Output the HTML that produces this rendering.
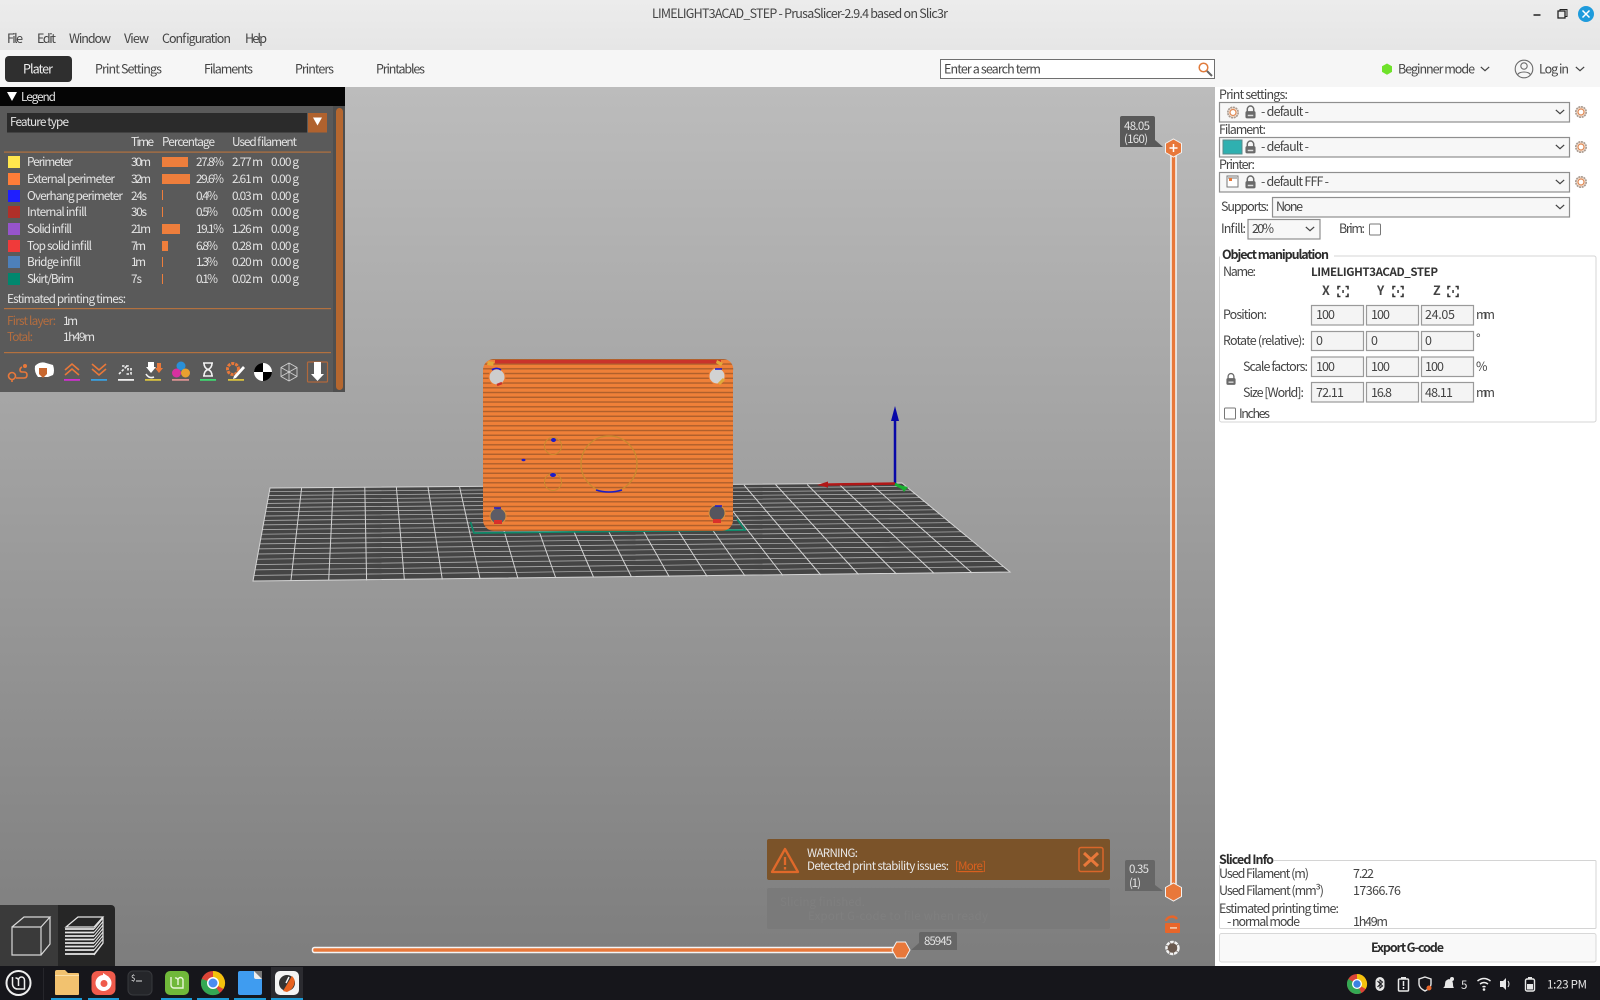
<!DOCTYPE html>
<html><head><meta charset="utf-8"><title>PrusaSlicer</title>
<style>
html,body{margin:0;padding:0;width:1600px;height:1000px;overflow:hidden;background:#fff}
svg{display:block}
text{font-family:"Noto Sans CJK SC","Liberation Sans",sans-serif;font-size:12.5px;fill:#444}
.l text{font-size:11.8px;fill:#e4e4e4}
.h{stroke:#8f8f8f;fill:#f7f7f7;stroke-width:1.2}
.i{stroke:#9a9a9a;fill:#f4f4f4;stroke-width:1.2}
.b{font-weight:bold}
.w{fill:none;stroke:#f2f2f2;stroke-width:1.6}
.o{fill:none;stroke:#e8783a;stroke-width:1.6}
</style></head><body>
<svg width="1600" height="1000" viewBox="0 0 1600 1000" xmlns="http://www.w3.org/2000/svg">
<defs>
<linearGradient id="bg" x1="0" y1="0" x2="0" y2="1"><stop offset="0" stop-color="#bcbcbc"/><stop offset="1" stop-color="#7d7d7d"/></linearGradient>
<linearGradient id="tb" x1="0" y1="0" x2="0" y2="1"><stop offset="0" stop-color="#ececec"/><stop offset="1" stop-color="#e6e6e6"/></linearGradient>
<pattern id="st" patternUnits="userSpaceOnUse" width="10" height="4.75" y="360"><rect width="10" height="4.75" fill="#ef8038"/><rect y="3.3" width="10" height="1.45" fill="#b0602c"/></pattern>
<symbol id="gear" viewBox="0 0 14 14" overflow="visible"><circle cx="7" cy="7" r="5.2" fill="#f4dfd0" stroke="#a89a90" stroke-width="1.6" stroke-dasharray="2 .7"/><circle cx="7" cy="7" r="3" fill="#fff" stroke="#e08a55" stroke-width="1.2"/></symbol>
<symbol id="lock" viewBox="0 0 12 14" overflow="visible"><path d="M2.500 6.500V4a3.500 3.500 0 0 1 7 0v2.500" fill="none" stroke="#6a6a6a" stroke-width="1.600"/><rect x=".5" y="6" width="11" height="8" rx="1.800" fill="#6a6a6a"/><rect x="3" y="10" width="6" height="1.600" fill="#ddd"/></symbol>
<symbol id="chev" viewBox="0 0 12 7" overflow="visible"><path d="M1 1l5 4.500L11 1" fill="none" stroke="#444" stroke-width="1.500"/></symbol>
<symbol id="fix" viewBox="0 0 12 12" overflow="visible"><path d="M3.500 1H1v3M8.500 1H11v3M3.500 11H1V8M8.500 11H11V8" fill="none" stroke="#333" stroke-width="1.600"/><rect x="5.300" y="4.500" width="1.500" height="3" fill="#333"/></symbol>
</defs>

<rect width="1600" height="1000" fill="#fff"/>
<!-- viewport -->
<rect x="0" y="87" width="1215" height="880" fill="url(#bg)"/>
<!-- title + menu -->
<rect width="1600" height="50" fill="url(#tb)"/>
<rect y="50" width="1600" height="37" fill="#f6f6f6"/>
<text x="652" y="18" textLength="296">LIMELIGHT3ACAD_STEP - PrusaSlicer-2.9.4 based on Slic3r</text>
<path d="M1533.500 15h7" stroke="#222" stroke-width="1.500"/>
<rect x="1558" y="11" width="7" height="7" fill="none" stroke="#222" stroke-width="1.300"/><path d="M1560 11V9.500h7v7h-2" fill="none" stroke="#222"/>
<circle cx="1586" cy="14" r="8" fill="#1e9bdc"/><path d="M1582.500 10.500l7 7m0-7l-7 7" stroke="#fff" stroke-width="1.500"/>
<text x="7" y="43" textLength="16">File</text><text x="37" y="43" textLength="19">Edit</text><text x="69" y="43" textLength="42">Window</text><text x="124" y="43" textLength="25">View</text><text x="162" y="43" textLength="69">Configuration</text><text x="245" y="43" textLength="22">Help</text>

<rect x="5" y="56" width="67" height="26" rx="4" fill="#2f2f2f"/>
<text x="23" y="73.500" textLength="30" style="fill:#f0f0f0">Plater</text>
<text x="95" y="73.500" textLength="67">Print Settings</text><text x="204" y="73.500" textLength="49">Filaments</text><text x="295" y="73.500" textLength="39">Printers</text><text x="376" y="73.500" textLength="49">Printables</text>

<rect x="940.500" y="59.500" width="274" height="19" fill="#fff" stroke="#6f6f6f"/>
<text x="944" y="73.500" textLength="97">Enter a search term</text>
<circle cx="1203.500" cy="67.500" r="4.300" fill="none" stroke="#e07b3c" stroke-width="1.500"/><path d="M1207 71l5 5" stroke="#666" stroke-width="2"/>
<path d="M1387 63.500l5 2.800v5.600l-5 2.800-5-2.800v-5.600z" fill="#6fe22a"/>
<text x="1398" y="73.500" textLength="77">Beginner mode</text><use href="#chev" x="1480" y="66" width="10" height="6"/>
<circle cx="1524" cy="69" r="8.800" fill="none" stroke="#6b6b6b" stroke-width="1.100"/><circle cx="1524" cy="66" r="3.200" fill="none" stroke="#6b6b6b" stroke-width="1.100"/><path d="M1517.500 75c1-4 12-4 13 0" fill="none" stroke="#6b6b6b" stroke-width="1.100"/>
<text x="1539" y="73.500" textLength="30">Log in</text><use href="#chev" x="1575" y="66" width="10" height="6"/>

<!-- bed -->
<path d="M270 488L902 483L1010 572L253 581Z" fill="#454545"/>
<g stroke="#bdbdbd" stroke-width=".7" fill="none">
<path d="M269.300 491.700L906.300 486.500M268.600 495.500L910.700 490.200M267.900 499.400L915.200 493.900M267.200 503.400L919.900 497.700M266.400 507.500L924.600 501.700M265.700 511.700L929.500 505.700M264.900 516L934.500 509.800M264.100 520.400L939.600 514M263.200 524.900L944.800 518.300M262.400 529.500L950.100 522.700M261.500 534.200L955.600 527.200M260.700 539L961.200 531.800M259.800 543.900L966.800 536.500M258.900 548.900L972.600 541.300M257.900 554L978.600 546.200M257 559.200L984.600 551.100M256 564.500L990.700 556.200M255 569.900L997 561.400M254 575.400L1003.400 566.600"/>
</g>
<g stroke="#d4d4d4" stroke-width="1" fill="none">
<path d="M270 488L902 483L1010 572L253 581Z"/>
<path d="M301.600 488L290.900 581M333.200 488L328.700 580.500M364.800 487.500L366.600 580.500M396.400 487.500L404.400 580M428 487L442.300 579.500M459.600 487L480.100 579M491.200 487L518 578.500M522.800 486L555.800 578M554.400 486L593.700 577.500M586 486L631.500 577M617.600 485.500L669.400 577M649.200 485L707.200 576.500M680.800 485L745.100 576M712.400 485L782.900 575.500M744 485L820.800 575M775.600 484.500L858.600 574.500M807.200 484.500L896.500 574M838.800 484L934.300 573.500M870.400 483.500L972.200 573"/>
</g>
<!-- axes -->
<path d="M895 414V484" stroke="#0808a8" stroke-width="2.500"/><path d="M895 406l-4 15h8z" fill="#0808a8"/>
<path d="M826 484.500L895 483.500" stroke="#b01818" stroke-width="2.500"/><path d="M817 485l11-3.500v6z" fill="#b01818"/>
<path d="M895 484L905 489" stroke="#18b030" stroke-width="3"/><path d="M899 485l9 2-4 5z" fill="#18b030"/>
<!-- skirt -->
<path d="M470.500 522L474 533L745 530L737 519" fill="none" stroke="#0f8a6a" stroke-width="1.700"/>
<!-- part -->
<path d="M493 359H723a10 10 0 0 1 10 12V520a11 11 0 0 1-11 11H494a11 11 0 0 1-11-11V370a11 11 0 0 1 10-11Z" fill="url(#st)"/>
<rect x="495" y="360" width="226" height="3.500" fill="#c9332b"/>
<path d="M488 361l6 1-1 4-6-1z" fill="#e0a83a"/>
<path d="M717 360l6 3-2 3-5-3z" fill="#e0a83a"/>
<circle cx="497" cy="377" r="8" fill="#cdcdcd" stroke="#ee7f36"/><path d="M492 370a7 7 0 0 1 9 0" fill="none" stroke="#1818d0" stroke-width="1.500"/><path d="M497 385l5-2" stroke="#c9332b" stroke-width="2.500"/>
<circle cx="717" cy="376" r="8" fill="#d2d2d2" stroke="#ee7f36"/><path d="M715 369h7" stroke="#1818d0" stroke-width="1.500"/><path d="M719 384l5-5" stroke="#e0a83a" stroke-width="3"/>
<circle cx="498" cy="516" r="8" fill="#5c5c66" stroke="#d9913d"/><path d="M494 508h7" stroke="#1818d0" stroke-width="1.500"/><rect x="494" y="520" width="8" height="4" fill="#d9302b"/>
<circle cx="717" cy="513" r="8" fill="#55555e" stroke="#d9913d"/><path d="M715 506h7" stroke="#1818d0" stroke-width="1.500"/><rect x="713" y="519" width="8" height="4" fill="#d9302b"/>
<circle cx="609" cy="464" r="28" fill="none" stroke="#c98a30" stroke-width="1.300"/>
<path d="M596 490q13 4 26 0" fill="none" stroke="#1c1cc8" stroke-width="1.600"/>
<circle cx="553" cy="446" r="8.500" fill="none" stroke="#c98a30"/><circle cx="553" cy="482" r="8.500" fill="none" stroke="#c98a30"/>
<ellipse cx="553.500" cy="440" rx="2.500" ry="2" fill="#1c1cc8"/><ellipse cx="553" cy="475" rx="3" ry="2" fill="#1c1cc8"/><ellipse cx="523.500" cy="460" rx="2" ry="1.200" fill="#1c1cc8"/>

<!-- legend -->
<rect x="0" y="87" width="345" height="305" fill="#5a5a5a"/>
<rect x="333" y="106" width="12" height="286" fill="#4f4f4f"/>
<rect x="0" y="87" width="345" height="19" fill="#050505"/>
<rect x="336" y="108" width="7" height="282" rx="3.500" fill="#b5672f"/>
<rect x="7" y="113" width="300" height="19.500" fill="#2b2b2b"/>
<rect x="308" y="113" width="19" height="19.500" fill="#b0622e"/>
<path d="M313 117.500h9l-4.500 8z" fill="#fff"/>
<path d="M7 92h10l-5 9z" fill="#fff"/>
<g class="l">
<text x="21" y="101" textLength="35">Legend</text>
<text x="10" y="126" textLength="59">Feature type</text>
<text x="131" y="146" textLength="23">Time</text><text x="162" y="146" textLength="53">Percentage</text><text x="232" y="146" textLength="65">Used filament</text>
<rect x="4" y="151.500" width="327" height="1.200" fill="#b3713f"/>

<rect x="8" y="156" width="12" height="12" fill="#ffe64d"/><text x="27" y="166" textLength="46">Perimeter</text><text x="131" y="166" textLength="20">30m</text><rect x="162" y="157" width="26" height="10" fill="#ee7e3c"/><text x="196" y="166" textLength="28">27.8%</text><text x="232" y="166" textLength="31">2.77 m</text><text x="271" y="166" textLength="28">0.00 g</text>
<rect x="8" y="173" width="12" height="12" fill="#ff7d38"/><text x="27" y="183" textLength="88">External perimeter</text><text x="131" y="183" textLength="20">32m</text><rect x="162" y="174" width="28" height="10" fill="#ee7e3c"/><text x="196" y="183" textLength="28">29.6%</text><text x="232" y="183" textLength="31">2.61 m</text><text x="271" y="183" textLength="28">0.00 g</text>
<rect x="8" y="190" width="12" height="12" fill="#1f1fff"/><text x="27" y="200" textLength="96">Overhang perimeter</text><text x="131" y="200" textLength="16">24s</text><rect x="162" y="190" width="1" height="10" fill="#ee7e3c"/><text x="196" y="200" textLength="22">0.4%</text><text x="232" y="200" textLength="31">0.03 m</text><text x="271" y="200" textLength="28">0.00 g</text>
<rect x="8" y="206" width="12" height="12" fill="#b03029"/><text x="27" y="216" textLength="60">Internal infill</text><text x="131" y="216" textLength="16">30s</text><rect x="162" y="207" width="1" height="10" fill="#ee7e3c"/><text x="196" y="216" textLength="22">0.5%</text><text x="232" y="216" textLength="31">0.05 m</text><text x="271" y="216" textLength="28">0.00 g</text>
<rect x="8" y="223" width="12" height="12" fill="#9654cc"/><text x="27" y="233" textLength="45">Solid infill</text><text x="131" y="233" textLength="20">21m</text><rect x="162" y="224" width="18" height="10" fill="#ee7e3c"/><text x="196" y="233" textLength="28">19.1%</text><text x="232" y="233" textLength="31">1.26 m</text><text x="271" y="233" textLength="28">0.00 g</text>
<rect x="8" y="240" width="12" height="12" fill="#f03a3a"/><text x="27" y="250" textLength="65">Top solid infill</text><text x="131" y="250" textLength="15">7m</text><rect x="162" y="241" width="6" height="10" fill="#ee7e3c"/><text x="196" y="250" textLength="22">6.8%</text><text x="232" y="250" textLength="31">0.28 m</text><text x="271" y="250" textLength="28">0.00 g</text>
<rect x="8" y="256" width="12" height="12" fill="#4d80ba"/><text x="27" y="266" textLength="54">Bridge infill</text><text x="131" y="266" textLength="15">1m</text><rect x="162" y="257" width="1" height="10" fill="#ee7e3c"/><text x="196" y="266" textLength="22">1.3%</text><text x="232" y="266" textLength="31">0.20 m</text><text x="271" y="266" textLength="28">0.00 g</text>
<rect x="8" y="273" width="12" height="12" fill="#00876e"/><text x="27" y="283" textLength="47">Skirt/Brim</text><text x="131" y="283" textLength="11">7s</text><rect x="162" y="274" width="1" height="10" fill="#ee7e3c"/><text x="196" y="283" textLength="22">0.1%</text><text x="232" y="283" textLength="31">0.02 m</text><text x="271" y="283" textLength="28">0.00 g</text>

<text x="7" y="303" textLength="119">Estimated printing times:</text>
<rect x="4" y="308" width="327" height="1.200" fill="#b3713f"/>
<text x="7" y="325" textLength="49" style="fill:#b56d3e">First layer:</text><text x="63" y="325" textLength="15">1m</text>
<text x="7" y="341" textLength="26" style="fill:#b56d3e">Total:</text><text x="63" y="341" textLength="32">1h49m</text>
<rect x="4" y="352" width="327" height="1.200" fill="#b3713f"/>
</g>
<!-- legend icons -->
<circle cx="12" cy="376" r="3.500" class="o"/><path d="M12 380v2M16 378h8q3 0 3-3t-3-3h-2q-2 0-2-2t2-3" class="o"/><circle cx="25" cy="366" r="2" fill="#e8783a"/>
<path d="M35 366q5-5 11-3l7 2q2 6 0 10l-5 2H38q-4-5-3-11z" fill="#fff"/><path d="M39 368h8v6l-4 4-4-4z" fill="#c8672f"/>
<path d="M65 370l7-6 7 6M65 375l7-6 7 6" class="o"/><rect x="64" y="379" width="16" height="1.800" fill="#d030d0"/>
<path d="M92 364l7 6 7-6M92 369l7 6 7-6" class="o"/><rect x="91" y="379" width="16" height="1.800" fill="#3aa0e0"/>
<path d="M119 374l8-8M122 366h6v5M131 368v6h-6" class="w" stroke-dasharray="2.500 1.500"/><rect x="118" y="379" width="16" height="1.800" fill="#eee"/>
<path d="M148 362h6v5h2l-5 6-5-6h2z" fill="#fff"/><path d="M157 363h4v5h2l-4 5-4-5h2z" fill="#e8783a"/><path d="M146 374q3 5 8 3" class="w"/><rect x="145" y="379" width="16" height="1.800" fill="#d8c040"/>
<circle cx="181" cy="366" r="4.500" fill="#2a90d8"/><circle cx="176.500" cy="373" r="4.500" fill="#d830a0"/><circle cx="185.500" cy="373" r="4.500" fill="#e8a030"/><rect x="172" y="379" width="17" height="1.800" fill="#d89090"/>
<path d="M203 363h10M203 376h10M204 363q0 5 4 6.500q-4 1.500-4 6.500M212 363q0 5-4 6.500q4 1.500 4 6.500" class="w"/><rect x="200" y="379" width="16" height="1.800" fill="#40d870"/>
<circle cx="233" cy="369" r="5.500" fill="none" stroke="#e8783a" stroke-width="3" stroke-dasharray="3 1"/><path d="M234 376l9-10 2 2-9 10-3 1z" fill="#fff"/><rect x="228" y="379" width="16" height="1.800" fill="#d8c040"/>
<circle cx="263" cy="372" r="9" fill="#fff"/><path d="M263 363a9 9 0 0 0-9 9h9zM263 372h9a9 9 0 0 1-9 9z" fill="#000"/>
<path d="M289 363l8 4.500v9l-8 4.500-8-4.500v-9zM281 367.500l8 4.500 8-4.500M289 372v9M289 363v9M281 376.500l8-4.500 8 4.500" fill="none" stroke="#cfcfcf" stroke-width=".9"/>
<rect x="307.500" y="362" width="20" height="20" rx="1" fill="none" stroke="#b0683c" stroke-width="1.200"/><path d="M314 362h7v12h3l-6.500 7-6.500-7h3z" fill="#fff"/>

<!-- vertical slider -->
<rect x="1171" y="148" width="5" height="744" fill="#e8783a" stroke="#f5f5f5" stroke-width="1.500"/>
<path d="M1173.500 139l8 4.500v9l-8 4.500-8-4.500v-9z" fill="#e8783a" stroke="#f2f2f2" stroke-width="1"/><path d="M1173.500 144v8M1169.500 148h8" stroke="#fff" stroke-width="1.500"/>
<path d="M1173.500 883l8 4.500v9l-8 4.500-8-4.500v-9z" fill="#e8783a" stroke="#f2f2f2" stroke-width="1"/>
<path d="M1120 118a2 2 0 0 1 2-2h31a2 2 0 0 1 2 2v29h-35zM1155 140l8 7h-8z" fill="#595959"/>
<text x="1124" y="130" textLength="26" style="font-size:11.500px;fill:#e4e4e4">48.05</text><text x="1124" y="143" textLength="24" style="font-size:11.500px;fill:#e4e4e4">(160)</text>
<path d="M1125 862a2 2 0 0 1 2-2h26a2 2 0 0 1 2 2v29h-30zM1155 885l8 6h-8z" fill="#666"/>
<text x="1129" y="873" textLength="20" style="font-size:11.500px;fill:#e4e4e4">0.35</text><text x="1129" y="887" textLength="12" style="font-size:11.500px;fill:#e4e4e4">(1)</text>
<path d="M1166 921a6 5 0 0 1 11-2" fill="none" stroke="#e8662a" stroke-width="2.500"/><rect x="1165" y="923" width="15" height="10" rx="1" fill="#e8662a"/><rect x="1170" y="927" width="7" height="1.800" fill="#f0c0a0"/>
<circle cx="1172.500" cy="948" r="6" fill="#6a5a50" stroke="#f2f2f2" stroke-width="2.500" stroke-dasharray="3.500 .8"/>
<!-- horizontal slider -->
<rect x="312.500" y="947.500" width="586" height="5" rx="2" fill="#e8783a" stroke="#f5f5f5" stroke-width="1.500"/>
<path d="M892 950l4.500-8h9l4.500 8-4.500 8h-9z" fill="#e8783a" stroke="#f2f2f2"/>
<path d="M919 934a2 2 0 0 1 2-2h34a2 2 0 0 1 2 2v16h-38zM919 943l-8 7h8z" fill="#666"/>
<text x="924" y="945" textLength="28" style="font-size:11.500px;fill:#e4e4e4">85945</text>

<!-- notifications -->
<rect x="767" y="839" width="343" height="41" rx="2" fill="#7b5329"/>
<path d="M785 849l13 23h-26z" fill="none" stroke="#e0692a" stroke-width="2.300" stroke-linejoin="round"/><path d="M785 857v8M785 867v2.500" stroke="#e0692a" stroke-width="2.300"/>
<text x="807" y="857" textLength="51" style="font-size:11.500px;fill:#e8e8e8">WARNING:</text>
<text x="807" y="870" textLength="142" style="font-size:11.500px;fill:#e8e8e8">Detected print stability issues:</text>
<text x="955" y="870" textLength="31" style="font-size:11.500px;fill:#d9601f;text-decoration:underline">[More]</text>
<rect x="1079" y="847.500" width="24" height="24" rx="2" fill="none" stroke="#d9662a" stroke-width="1.500"/><path d="M1084 853l14 13m0-13l-14 13" stroke="#e8783a" stroke-width="3"/>
<rect x="767" y="888" width="343" height="41" rx="2" fill="#7a7a7a"/>
<text x="780" y="906" textLength="85" style="font-size:11.500px;fill:#7f7f7f">Slicing finished.</text>
<text x="808" y="920" textLength="180" style="font-size:11.500px;fill:#7f7f7f">Export G-code to file when ready</text>

<!-- view toolbar -->
<rect x="0" y="905" width="58" height="61" fill="#3a3a3a"/>
<path d="M58 905h53a4 4 0 0 1 4 4v57H58z" fill="#262626"/>
<path d="M12 927h29v28H12zM12 927l12-10h26l-9 10M50 917v27l-9 11" fill="none" stroke="#d8d8d8" stroke-width="1.200"/>
<path d="M66 927l12-10h25l-9 10zM103 917v26l-9 12" fill="none" stroke="#e4e4e4" stroke-width="1.200"/>
<path d="M65 929h29M65 932.500h29M65 936h29M65 939.500h29M65 943h29M65 946.500h29M65 950h29M65 954h29" stroke="#e4e4e4" stroke-width="1.700"/>
<path d="M94 929l9-11M94 932.500l9-11M94 936l9-11M94 939.500l9-11M94 943l9-11M94 946.500l9-11M94 950l9-11M94 954l9-11" stroke="#e4e4e4" stroke-width="1"/>

<!-- sidebar -->
<rect x="1215" y="87" width="385" height="880" fill="#fff"/>
<rect x="1219.500" y="102.500" width="350" height="19.500" class="h"/>
<rect x="1219.500" y="137.500" width="350" height="19.500" class="h"/>
<rect x="1219.500" y="172.500" width="350" height="19.500" class="h"/>
<text x="1219" y="99" textLength="69">Print settings:</text>
<use href="#gear" x="1226" y="105.500" width="14" height="14"/><use href="#lock" x="1245" y="105.500" width="11" height="13"/>
<text x="1261" y="116" textLength="48">- default -</text><use href="#chev" x="1555" y="109" width="10" height="6"/>
<use href="#gear" x="1574" y="105" width="14" height="14"/>
<text x="1219" y="134" textLength="47">Filament:</text>
<rect x="1223" y="140" width="19" height="14" fill="#2fb0b0" stroke="#5a8a8a"/><use href="#lock" x="1245" y="140.500" width="11" height="13"/>
<text x="1261" y="151" textLength="48">- default -</text><use href="#chev" x="1555" y="144" width="10" height="6"/>
<use href="#gear" x="1574" y="140" width="14" height="14"/>
<text x="1219" y="169" textLength="36">Printer:</text>
<rect x="1227" y="176" width="11" height="11" fill="#fff" stroke="#777"/><rect x="1228" y="177" width="10" height="2" fill="#bbb"/><rect x="1229" y="178" width="3" height="3" fill="#e8783a"/><use href="#lock" x="1245" y="175.500" width="11" height="13"/>
<text x="1261" y="186" textLength="68">- default FFF -</text><use href="#chev" x="1555" y="179" width="10" height="6"/>
<use href="#gear" x="1574" y="175" width="14" height="14"/>
<text x="1221" y="211" textLength="48">Supports:</text>
<rect x="1272.500" y="197.500" width="297" height="19.500" class="h"/><text x="1276" y="211" textLength="27">None</text><use href="#chev" x="1555" y="204" width="10" height="6"/>
<text x="1221" y="233" textLength="25">Infill:</text>
<rect x="1248" y="219.500" width="72" height="19.500" class="h"/><text x="1252" y="233" textLength="22">20%</text><use href="#chev" x="1305" y="226" width="10" height="6"/>
<text x="1339" y="233" textLength="26">Brim:</text><rect x="1369.500" y="224" width="11" height="11" rx="1" fill="#fff" stroke="#777"/>

<rect x="1219.500" y="256" width="376.500" height="166" rx="2" fill="#fff" stroke="#d4d4d4"/>
<rect x="1220" y="250" width="114" height="12" fill="#fff"/>
<text x="1222" y="259" textLength="107" class="b" style="fill:#2c2c2c">Object manipulation</text>
<text x="1223" y="276" textLength="33">Name:</text>
<text x="1311" y="276" textLength="127" class="b" style="fill:#333;font-size:11.500px">LIMELIGHT3ACAD_STEP</text>
<text x="1322" y="295" textLength="8" class="b">X</text><use href="#fix" x="1337" y="285.500" width="12" height="12"/>
<text x="1377" y="295" textLength="8" class="b">Y</text><use href="#fix" x="1392" y="285.500" width="12" height="12"/>
<text x="1433" y="295" textLength="8" class="b">Z</text><use href="#fix" x="1447" y="285.500" width="12" height="12"/>
<text x="1223" y="319" textLength="44">Position:</text>
<rect x="1311.500" y="305.500" width="52" height="19.500" class="i"/><rect x="1366.500" y="305.500" width="52" height="19.500" class="i"/><rect x="1421.500" y="305.500" width="52" height="19.500" class="i"/>
<text x="1316" y="319" textLength="19">100</text><text x="1371" y="319" textLength="19">100</text><text x="1425" y="319" textLength="30">24.05</text><text x="1476" y="319" textLength="19">mm</text>
<text x="1223" y="345" textLength="82">Rotate (relative):</text>
<rect x="1311.500" y="331.500" width="52" height="19" class="i"/><rect x="1366.500" y="331.500" width="52" height="19" class="i"/><rect x="1421.500" y="331.500" width="52" height="19" class="i"/>
<text x="1316" y="345">0</text><text x="1371" y="345">0</text><text x="1425" y="345">0</text><text x="1476" y="343">°</text>
<text x="1243" y="371" textLength="65">Scale factors:</text>
<rect x="1311.500" y="357" width="52" height="19.500" class="i"/><rect x="1366.500" y="357" width="52" height="19.500" class="i"/><rect x="1421.500" y="357" width="52" height="19.500" class="i"/>
<text x="1316" y="371" textLength="19">100</text><text x="1371" y="371" textLength="19">100</text><text x="1425" y="371" textLength="19">100</text><text x="1476" y="371" textLength="10">%</text>
<text x="1243" y="397" textLength="61">Size [World]:</text>
<rect x="1311.500" y="382.500" width="52" height="19.500" class="i"/><rect x="1366.500" y="382.500" width="52" height="19.500" class="i"/><rect x="1421.500" y="382.500" width="52" height="19.500" class="i"/>
<text x="1316" y="397" textLength="28">72.11</text><text x="1371" y="397" textLength="21">16.8</text><text x="1425" y="397" textLength="28">48.11</text><text x="1476" y="397" textLength="19">mm</text>
<use href="#lock" x="1226" y="373" width="10" height="12"/>
<rect x="1224.500" y="408" width="11" height="11" rx="1" fill="#fff" stroke="#777"/><text x="1239" y="418" textLength="31">Inches</text>

<rect x="1219.500" y="860.500" width="376.500" height="68" rx="1" fill="#fff" stroke="#d4d4d4"/>
<rect x="1218" y="854" width="56" height="11" fill="#fff"/>
<text x="1219" y="864" textLength="55" class="b" style="fill:#2c2c2c">Sliced Info</text>
<text x="1219" y="878" textLength="90">Used Filament (m)</text><text x="1353" y="878" textLength="21">7.22</text>
<text x="1219" y="895" textLength="105">Used Filament (mm³)</text><text x="1353" y="895" textLength="48">17366.76</text>
<text x="1219" y="913" textLength="120">Estimated printing time:</text>
<text x="1227" y="926" textLength="73">- normal mode</text><text x="1353" y="926" textLength="35">1h49m</text>
<rect x="1219.500" y="933.500" width="376.500" height="28.500" rx="2" fill="#f9f9f9" stroke="#d8d8d8"/>
<text x="1371" y="952" textLength="73" class="b" style="fill:#2c2c2c">Export G-code</text>

<!-- taskbar -->
<rect y="966" width="1600" height="34" fill="#16161b"/>
<rect x="271" y="967" width="32" height="33" fill="#2b2b30"/>
<path d="M43.500 968v32" stroke="#26262b"/>
<circle cx="18.500" cy="983" r="12" fill="none" stroke="#eee" stroke-width="2"/>
<path d="M12.500 977v7a5 5 0 0 0 5 5h7v-9a3 3 0 0 0-6 0v6m0-6a3 3 0 0 0-3-2" fill="none" stroke="#eee" stroke-width="1.500"/>
<path d="M55 972a2 2 0 0 1 2-2h8l3 3h10a1 1 0 0 1 1 1v20a1 1 0 0 1-1 1H56a1 1 0 0 1-1-1z" fill="#f2c26f"/><rect x="55" y="975" width="24" height="1" fill="#fbe0a8"/>
<rect x="91.500" y="971" width="24" height="24" rx="6" fill="#ef5b4c"/><circle cx="103.500" cy="983" r="8" fill="#fff"/><circle cx="104" cy="983.500" r="3.500" fill="#ef5b4c"/><path d="M103 973l6 4-6 2z" fill="#fff"/>
<rect x="128" y="971" width="24" height="24" rx="5" fill="#25262a" stroke="#38393d"/><text x="131" y="981" style="font-size:8px;fill:#ddd">$</text><path d="M136 981h6" stroke="#ddd"/>
<rect x="165" y="971" width="24" height="24" rx="5" fill="#70b83a"/><path d="M171 977v8a3 3 0 0 0 3 3h9v-8a2.500 2.500 0 0 0-5 0v5m0-5a2.500 2.500 0 0 0-3-2" fill="none" stroke="#e8f5d8" stroke-width="1.400"/>
<circle cx="213" cy="983" r="12" fill="#dc4437"/><path d="M213 971a12 12 0 0 1 10.400 18L213 983z" fill="#f4c20d"/><path d="M202.600 977a12 12 0 0 0 15.400 17L213 983z" fill="#34a853" transform="rotate(-10 213 983)"/><circle cx="213" cy="983" r="6" fill="#fff"/><circle cx="213" cy="983" r="4.500" fill="#4a8cf0"/>
<path d="M238 973a2 2 0 0 1 2-2h14l8 8v14a2 2 0 0 1-2 2h-20a2 2 0 0 1-2-2z" fill="#3f9cf0"/><path d="M254 971l8 0v8z" fill="#777"/><path d="M254 971l8 8h-6a2 2 0 0 1-2-2z" fill="#eee"/>
<rect x="275" y="971" width="24" height="24" rx="5" fill="#f4f4f4"/><circle cx="287" cy="983" r="8" fill="#333"/><path d="M283 991l9-15q4 4 2 9t-7 7z" fill="#e8621f"/><path d="M286 983l3-6" stroke="#f4f4f4" stroke-width="1.500"/>
<rect x="51" y="998" width="31" height="2" fill="#1c9ad6"/><rect x="88" y="998" width="31" height="2" fill="#1c9ad6"/><rect x="161" y="998" width="31" height="2" fill="#1c9ad6"/><rect x="197" y="998" width="32" height="2" fill="#1c9ad6"/><rect x="234" y="998" width="32" height="2" fill="#1c9ad6"/><rect x="271" y="998" width="32" height="2" fill="#1c9ad6"/>
<!-- tray -->
<circle cx="1357" cy="984" r="10" fill="#dc4437"/><path d="M1357 974a10 10 0 0 1 8.700 15L1357 984z" fill="#f4c20d"/><path d="M1348.300 979a10 10 0 0 0 13 14L1357 984z" fill="#34a853"/><circle cx="1357" cy="984" r="5" fill="#fff"/><circle cx="1357" cy="984" r="3.700" fill="#3b82e0"/>
<rect x="1375.500" y="977" width="9" height="14" rx="4.500" fill="#e8e8e8"/><path d="M1377.500 981l5 5-2.500 2v-8l2.500 2-5 5" fill="none" stroke="#16161b"/>
<rect x="1398.500" y="979" width="10" height="12" rx="1" fill="none" stroke="#e8e8e8" stroke-width="1.500"/><path d="M1403.500 981v5M1403.500 987v2" stroke="#e8e8e8" stroke-width="1.500"/><rect x="1401" y="977" width="5" height="2.500" fill="#e8e8e8"/>
<path d="M1425 977l6 2v5q0 4-6 7q-6-3-6-7v-5z" fill="none" stroke="#e8e8e8" stroke-width="1.400"/><circle cx="1429" cy="988" r="2.500" fill="#e8662a"/>
<path d="M1443 988q2-1 2-4q0-4 4-5q4 1 4 5q0 3 1 4z" fill="#e8e8e8"/><circle cx="1452" cy="979" r="2" fill="#e8e8e8"/>
<text x="1461" y="989" style="font-size:11.500px;fill:#e4e4e4">5</text>
<path d="M1477.500 981q6.500-5 13 0M1480 984q4-3 8 0M1482.500 987q1.500-1 3 0" fill="none" stroke="#eee" stroke-width="1.500"/><circle cx="1484" cy="989.500" r="1.300" fill="#eee"/>
<path d="M1500 981h3l3-3v12l-3-3h-3z" fill="#e8e8e8"/><path d="M1508 981q2 3 0 6" fill="none" stroke="#e8e8e8"/>
<rect x="1525.500" y="979" width="9" height="12" rx="1.500" fill="none" stroke="#e8e8e8" stroke-width="1.400"/><rect x="1528" y="977" width="4" height="2" fill="#e8e8e8"/><rect x="1527" y="984" width="6" height="5.500" fill="#e8e8e8"/>
<text x="1547" y="988.500" textLength="40" style="fill:#e8e8e8;font-size:11.500px">1:23 PM</text>
</svg>
</body></html>
